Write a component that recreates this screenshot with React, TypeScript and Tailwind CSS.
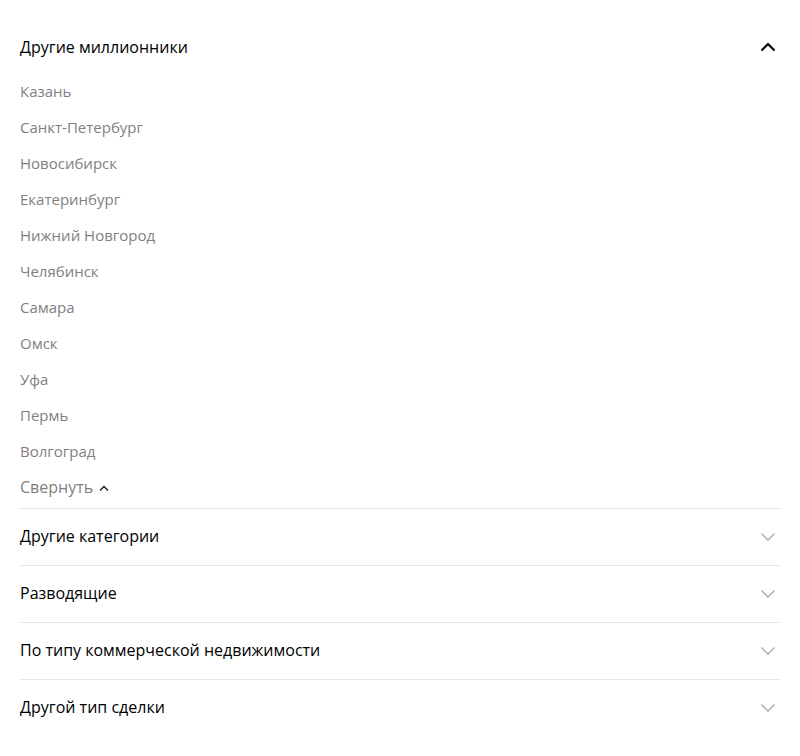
import React from "react";

const cities = [
  "Казань",
  "Санкт-Петербург",
  "Новосибирск",
  "Екатеринбург",
  "Нижний Новгород",
  "Челябинск",
  "Самара",
  "Омск",
  "Уфа",
  "Пермь",
  "Волгоград",
];

const sections = [
  "Другие категории",
  "Разводящие",
  "По типу коммерческой недвижимости",
  "Другой тип сделки",
];

function ChevronUp() {
  return (
    <svg width="16" height="10" viewBox="0 0 16 10" fill="none">
      <path d="M1.5 8.5 L8 2 L14.5 8.5" stroke="#000" strokeWidth="2.2" />
    </svg>
  );
}

function ChevronDown() {
  return (
    <svg width="16" height="10" viewBox="0 0 16 10" fill="none">
      <path d="M1.5 1.5 L8 8 L14.5 1.5" stroke="#b5b5b5" strokeWidth="1.6" />
    </svg>
  );
}

export default function App() {
  return (
    <div
      className="w-[800px] h-[756px] bg-white px-5 pt-[29px] text-black"
      style={{ fontFamily: '"Open Sans", "Noto Sans", sans-serif' }}
    >
      <div className="flex h-9 items-center justify-between">
        <span className="text-[16px]">Другие миллионники</span>
        <span className="mr-[4px] flex items-center">
          <ChevronUp />
        </span>
      </div>
      <ul className="mt-2 flex flex-col">
        {cities.map((c) => (
          <li key={c} className="flex h-9 items-center text-[15px] text-[#7f7f7f]">
            {c}
          </li>
        ))}
        <li className="flex h-9 items-center gap-[6px] text-[16px] text-[#7f7f7f]">
          Свернуть
          <svg width="10" height="7" viewBox="0 0 10 7" fill="none" className="mt-[2px]">
            <path d="M1 5.5 L5 1.5 L9 5.5" stroke="#222" strokeWidth="1.5" />
          </svg>
        </li>
      </ul>
      <div className="mt-[3px]">
        {sections.map((s) => (
          <div
            key={s}
            className="flex h-[57px] items-center justify-between border-t border-[#e6e6e6] pb-[3px]"
          >
            <span className="text-[16px]">{s}</span>
            <span className="mr-[4px] mt-[2px] flex items-center">
              <ChevronDown />
            </span>
          </div>
        ))}
      </div>
    </div>
  );
}
